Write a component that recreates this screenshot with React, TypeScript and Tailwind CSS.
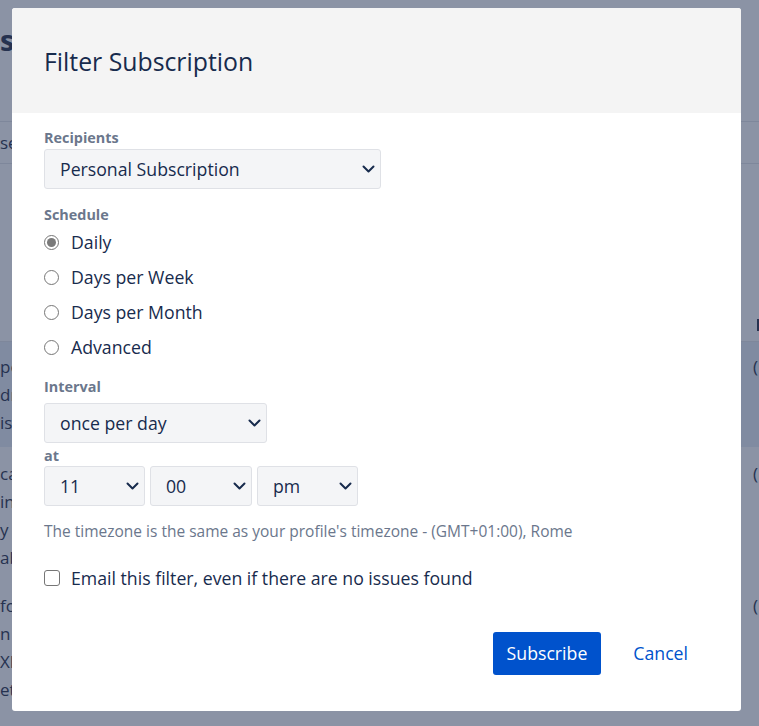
import { useState } from "react";

const Chevron = () => (
  <svg width="13" height="8" viewBox="0 0 13 8" fill="none" className="shrink-0">
    <path d="M1.5 1.5 6.5 6.5 11.5 1.5" stroke="#172b4d" strokeWidth="2" strokeLinecap="round" strokeLinejoin="round" />
  </svg>
);

const FakeSelect = ({ value, className }: { value: string; className: string }) => (
  <div
    className={`flex h-[40px] items-center justify-between rounded-[3px] border border-[#dfe1e6] bg-[#f4f5f7] pl-[15px] pr-[5px] text-[17.7px] text-[#172b4d] ${className}`}
  >
    <span>{value}</span>
    <Chevron />
  </div>
);

const Label = ({ children, className = "" }: { children: string; className?: string }) => (
  <div className={`text-[14.4px] font-bold leading-[20px] text-[#6b778c] ${className}`}>{children}</div>
);

const Radio = ({ checked }: { checked: boolean }) => (
  <span className="flex h-[15px] w-[15px] shrink-0 items-center justify-center rounded-full border border-[#767676] bg-white">
    {checked && <span className="h-[9px] w-[9px] rounded-full bg-[#7a7a7a]" />}
  </span>
);

const BgLines = ({ left, right }: { left: string[]; right?: string }) => (
  <div className="flex justify-between text-[17px] leading-[28px] text-[#263250]">
    <div>
      {left.map((t) => (
        <div key={t}>{t}</div>
      ))}
    </div>
    {right && <div className="pr-[1px]">{right}</div>}
  </div>
);

export default function App() {
  const [schedule, setSchedule] = useState("Daily");
  const options = ["Daily", "Days per Week", "Days per Month", "Advanced"];

  return (
    <div className="relative h-[726px] w-full overflow-hidden bg-[#8b93a5] font-['Open_Sans',sans-serif]">
      {/* dimmed page underneath */}
      <div className="flex flex-col">
        <div className="h-[121px] pt-[18px]">
          <div className="text-[29px] font-bold text-[#263250]">s</div>
        </div>
        <div className="flex h-[42px] items-center border-t border-[#7e879b] text-[17px] text-[#263250]">
          <span>se</span>
        </div>
        <div className="flex h-[178px] items-end justify-end border-t border-[#7e879b] pb-[10px]">
          <span className="mr-[-3px] h-[12px] w-[5px] bg-[#263250]" />
        </div>
        <div className="relative h-[106px] border-t border-[#7e879b] bg-[#808ba1] pt-[11px]">
          <BgLines left={["pe", "dr", "is"]} right="(" />
        </div>
        <div className="h-[135px] pt-[13px]">
          <BgLines left={["ca", "in", "y", "ab"]} right="(" />
        </div>
        <div className="pt-[10px]">
          <BgLines left={["fo", "n", "XP", "et"]} right="(" />
        </div>
      </div>

      {/* modal */}
      <div className="absolute left-[12px] top-[8px] flex h-[703px] w-[729px] flex-col overflow-hidden rounded-[3px] bg-white">
        <header className="flex h-[105px] shrink-0 items-center bg-[#f4f4f4] pl-[32px] pt-[2px]">
          <h2 className="text-[24.8px] text-[#172b4d]">Filter Subscription</h2>
        </header>

        <div className="flex flex-col px-[32px] pt-[15px]">
          <Label>Recipients</Label>
          <FakeSelect value="Personal Subscription" className="mt-[1px] w-[337px]" />

          <Label className="mt-[16px]">Schedule</Label>
          <div className="flex flex-col">
            {options.map((o) => (
              <button
                key={o}
                onClick={() => setSchedule(o)}
                className="flex h-[35px] items-center gap-[12px] text-left text-[17.7px] text-[#172b4d]"
              >
                <Radio checked={schedule === o} />
                <span>{o}</span>
              </button>
            ))}
          </div>

          <Label className="mt-[12px]">Interval</Label>
          <FakeSelect value="once per day" className="mt-[6px] w-[223px]" />

          <Label className="mt-[3px]">at</Label>
          <div className="flex gap-[5px]">
            <FakeSelect value="11" className="w-[101px]" />
            <FakeSelect value="00" className="w-[102px]" />
            <FakeSelect value="pm" className="w-[101px]" />
          </div>

          <p className="mt-[14px] text-[15.5px] leading-[22px] text-[#6b778c]">
            The timezone is the same as your profile's timezone - (GMT+01:00), Rome
          </p>

          <label className="mt-[24px] flex h-[24px] items-center gap-[11px] text-[17.7px] text-[#172b4d]">
            <span className="h-[16px] w-[16px] shrink-0 rounded-[3px] border border-[#767676] bg-white" />
            <span>Email this filter, even if there are no issues found</span>
          </label>
        </div>

        <footer className="mt-[42px] flex items-center justify-end gap-[32px] pr-[53px]">
          <button className="h-[43px] rounded-[3px] bg-[#0052cc] px-[14px] pb-[1px] text-[17.7px] text-white">Subscribe</button>
          <button className="text-[17.7px] text-[#0052cc]">Cancel</button>
        </footer>
      </div>
    </div>
  );
}
